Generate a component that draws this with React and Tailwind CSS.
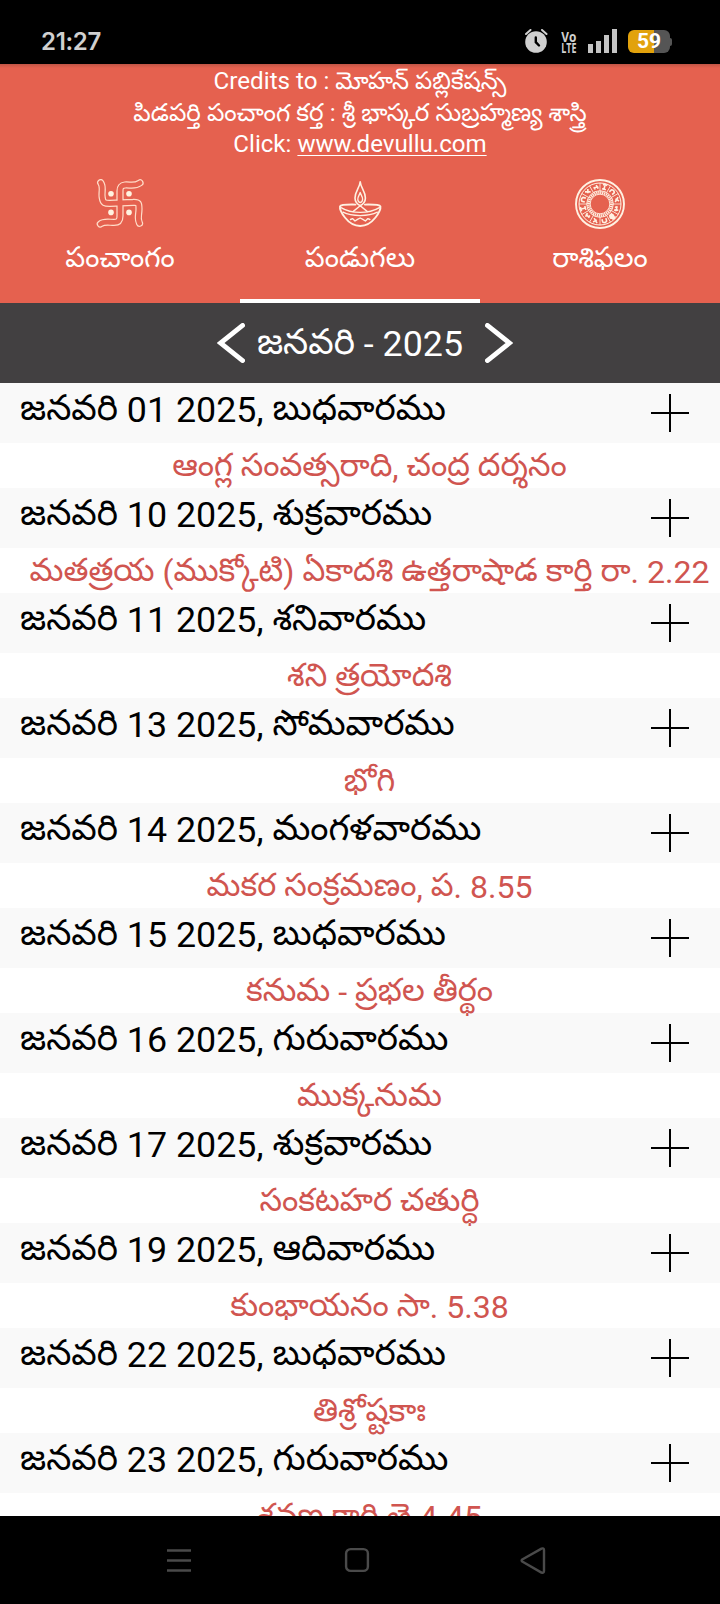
const days = [
  ['01', 'బుధవారము', 'ఆంగ్ల సంవత్సరాది, చంద్ర దర్శనం'],
  ['10', 'శుక్రవారము', 'మతత్రయ (ముక్కోటి) ఏకాదశి ఉత్తరాషాడ కార్తి రా. 2.22'],
  ['11', 'శనివారము', 'శని త్రయోదశి'],
  ['13', 'సోమవారము', 'భోగి'],
  ['14', 'మంగళవారము', 'మకర సంక్రమణం, ప. 8.55'],
  ['15', 'బుధవారము', 'కనుమ - ప్రభల తీర్థం'],
  ['16', 'గురువారము', 'ముక్కనుమ'],
  ['17', 'శుక్రవారము', 'సంకటహర చతుర్ధి'],
  ['19', 'ఆదివారము', 'కుంభాయనం సా. 5.38'],
  ['22', 'బుధవారము', 'తిశ్రోష్టకాః'],
  ['23', 'గురువారము', 'శ్రవణ కార్తి తె 4.45'],
];

// Lowers digits and Latin punctuation slightly against the Telugu letters.
function Mixed({ text }) {
  return text
    .split(/([0-9.,()-]+)/)
    .map((part, i) => (i % 2 ? <span key={i} className="align-[-0.05em]">{part}</span> : part));
}

function Swastika() {
  const arms =
    'M5.7 3.7 C9 8 6 14 7.3 19 C8 24 10 24.5 15 24.4 L38 23.4 C44 23 44 25 44 30 C44 36 42 39 44.5 44.3 M45 3.9 C39 8 35 5.5 30 6 C26 6.5 25 8 25 12 L25 37 C25 42 23 43.4 19 43.4 C14 43.4 9 42 5.3 45';
  return (
    <svg className="size-[50px]" viewBox="0 0 50 50" fill="none" strokeLinecap="round" strokeLinejoin="round">
      <path d={arms} stroke="#ffdcc8" strokeWidth="7.2" />
      <path d={arms} stroke="#e5614f" strokeWidth="4.8" />
      <g fill="#fff3e0">
        <circle cx="16" cy="14.7" r="2.8" />
        <circle cx="34" cy="14.7" r="2.8" />
        <circle cx="16" cy="33.4" r="2.8" />
        <circle cx="34" cy="33.4" r="2.8" />
      </g>
    </svg>
  );
}

function Lamp() {
  return (
    <svg className="size-[50px]" viewBox="0 0 50 50" fill="none" stroke="#fff1e2" strokeWidth="1.6" strokeLinejoin="round" strokeLinecap="round">
      <path d="M25.2 2.8 C24.7 9 20 12 20 19 C20 22.5 22 25 25.2 26.8 C28.4 25 30.4 22.5 30.4 19 C30.4 12 25.7 9 25.2 2.8Z" />
      <path strokeWidth="1.3" d="M25.2 13.5 C24.5 16 22.8 17.5 22.8 20.2 C22.8 22 23.9 23.2 25.2 23.6 C26.5 23.2 27.6 22 27.6 20.2 C27.6 17.5 25.9 16 25.2 13.5Z" />
      <path strokeWidth="1.9" d="M20.5 25.6 C12 25.4 5.6 26 5 27.4 C4.4 31 12 46.8 25.2 47 C38.4 46.8 46 31 45.4 27.4 C44.8 26 38.4 25.4 29.9 25.6" />
      <path strokeWidth="1.4" d="M6 28.6 C11 31.6 17 33.4 25.2 33.4 S39.4 31.6 44.4 28.6" />
      <path strokeWidth="1.3" d="M8 33.2 C13 35.8 19 36.6 25.2 36.6 S37.4 35.8 42.4 33.2" />
      <path strokeWidth="1.4" d="M25.2 26.8 L18 32.6 M25.2 26.8 L32.4 32.6" />
      <path strokeWidth="1.4" d="M15.5 40.5 L17.5 39.6 L20 42 L22.5 40.4 L25.2 39 L27.9 40.4 L30.4 42 L32.9 39.6 L34.9 40.5" />
    </svg>
  );
}

function Zodiac() {
  const sectors = Array.from({ length: 12 }, (_, i) => i * 30);
  const signs = [
    'M-2 -2 Q0 -4 2 -2 M-2 2 H2 M0 -2 V2',
    'M-2 2 V-1 Q0 -3 2 -1 V2',
    'M-2 -2 L2 2 M2 -2 L-1 1',
    'M-2.2 0 H2 L1 -2 M-1 0 V2 M2 0 V2',
  ];
  return (
    <svg className="size-[50px]" viewBox="0 0 50 50" fill="none" stroke="#fff1e2">
      <circle cx="25" cy="25" r="24" strokeWidth="1.9" />
      <circle cx="25" cy="25" r="21" strokeWidth="1" />
      <circle cx="25" cy="25" r="13.3" strokeWidth="0.9" />
      <circle cx="25" cy="25" r="11.5" strokeWidth="2.8" strokeDasharray="1.3 0.7" />
      <circle cx="25" cy="25" r="9.8" strokeWidth="0.9" />
      {sectors.map((a, i) => (
        <g key={a} transform={`rotate(${a} 25 25)`}>
          <path d="M25 4 V12" strokeWidth="0.8" />
          <g transform="rotate(15 25 25) translate(25 7.8)">
            <path d={signs[i % 4]} strokeWidth="1.6" />
          </g>
        </g>
      ))}
      <circle cx="36.8" cy="37.4" r="2.6" fill="#fff1e2" stroke="none" />
    </svg>
  );
}

function StatusBar() {
  return (
    <div className="flex h-16 shrink-0 items-end justify-between bg-black pb-[11px] pl-[41px] pr-[48px] text-[#d0d0d0]">
      <div className="mb-[-1px] font-[Inter,sans-serif] text-[24px] font-semibold leading-[24px] tracking-[-0.3px]">21:27</div>
      <div className="flex items-end">
        <svg className="mr-[12px] h-6 w-6" viewBox="0 0 24 24">
          <circle cx="11" cy="13" r="10.8" fill="#d0d0d0" />
          <path d="M1 5 L5.5 1 M21.5 5 L17 1" stroke="#d0d0d0" strokeWidth="2" strokeLinecap="round" />
          <path d="M10.8 8.5 V13.2 L14 16.5" fill="none" stroke="#000" strokeWidth="2.4" strokeLinecap="round" />
        </svg>
        <div className="mr-[11px] flex w-4 flex-col items-center font-['Open_Sans',sans-serif] text-[14px] font-bold leading-[11px]">
          <div className="scale-x-[0.85]">Vo</div>
          <div className="scale-x-[0.64]">LTE</div>
        </div>
        <div className="mr-[11px] flex items-end gap-[3px]">
          <div className="h-[9px] w-[5px] bg-[#c4c4c4]" />
          <div className="h-[12px] w-[5px] bg-[#c4c4c4]" />
          <div className="h-[18px] w-[5px] bg-[#c4c4c4]" />
          <div className="h-[24px] w-[5px] bg-[#c4c4c4]" />
        </div>
        <div className="flex items-center">
          <div className="flex h-[23px] w-[42px] items-center justify-center rounded-[6px] bg-linear-to-r from-[#e2a20c] from-62% to-[#555555] to-62% font-[Roboto,sans-serif] text-[21px] font-bold leading-none text-white">
            59
          </div>
          <div className="h-2 w-[2px] rounded-r-sm bg-[#555555]" />
        </div>
      </div>
    </div>
  );
}

function Tab({ icon, label, active }) {
  return (
    <div className="flex flex-col items-center justify-between">
      <div className="flex flex-col items-center">
        {icon}
        <div className="mt-[7px] text-[28px] leading-[44px]">{label}</div>
      </div>
      <div className={active ? 'h-1 w-full bg-white' : 'h-1 w-full'} />
    </div>
  );
}

export default function App() {
  return (
    <div className="flex h-[1604px] w-[720px] flex-col overflow-hidden bg-white font-[Roboto,'Noto_Sans_Telugu','Noto_Sans',sans-serif]">
      <StatusBar />
      <div className="flex h-[239px] shrink-0 flex-col bg-[#e5614f] text-white">
        <div className="h-1 shrink-0 bg-linear-to-b from-[#c05546] to-[#e5614f]" />
        <div className="-mt-px h-[111px] shrink-0 whitespace-nowrap text-center leading-[31px]">
          <div className="-mt-px text-[24.2px]">Credits to : మోహన్ పబ్లికేషన్స్</div>
          <div className="text-[24.5px]">పిడపర్తి పంచాంగ కర్త : శ్రీ భాస్కర సుబ్రహ్మణ్య శాస్త్రి</div>
          <div className="mt-px text-[24.1px]">
            Click: <span className="underline decoration-1 underline-offset-[3px]">www.devullu.com</span>
          </div>
        </div>
        <div className="grid flex-1 grid-cols-3 pt-px">
          <Tab icon={<Swastika />} label="పంచాంగం" />
          <Tab icon={<Lamp />} label="పండుగలు" active />
          <Tab icon={<Zodiac />} label="రాశిఫలం" />
        </div>
      </div>
      <div className="flex h-20 shrink-0 items-center bg-[#424041] pl-[217px] text-[35.8px] text-white">
        <svg className="h-10 w-7 shrink-0" viewBox="0 0 28 40" fill="none" stroke="white" strokeWidth="4.8" strokeLinecap="round" strokeLinejoin="miter">
          <path d="M25.6 2.4 L3.5 20 L25.6 37.6" />
        </svg>
        <div className="w-[240px] whitespace-nowrap pr-[10px] text-center leading-[52px]">
          <Mixed text="జనవరి - 2025" />
        </div>
        <svg className="h-10 w-7 shrink-0" viewBox="0 0 28 40" fill="none" stroke="white" strokeWidth="4.8" strokeLinecap="round" strokeLinejoin="miter">
          <path d="M2.4 2.4 L24.5 20 L2.4 37.6" />
        </svg>
      </div>
      <div className="min-h-0 flex-1 overflow-hidden">
        {days.map(([date, weekday, festival]) => (
          <div key={date}>
            <div className="flex h-[59.5px] items-start justify-between bg-[#f9f9f9] pl-5 pr-[31px]">
              <div className="h-[52px] whitespace-nowrap text-[35.8px] leading-[51px] text-black">
                <Mixed text={`జనవరి ${date} 2025, ${weekday}`} />
              </div>
              <svg className="mt-[11px] size-[38px]" viewBox="0 0 38 38" stroke="black" strokeWidth="2">
                <path d="M19 0 V38 M0 19 H38" />
              </svg>
            </div>
            <div className="h-[45.5px] whitespace-nowrap pl-[19px] text-center text-[32.1px] leading-[45px] text-[#d05550]">
              <Mixed text={festival} />
            </div>
          </div>
        ))}
      </div>
      <div className="flex h-[88px] shrink-0 items-center bg-black pl-[166px] pt-[2px]">
        <svg className="h-7 w-[26px]" viewBox="0 0 26 28" stroke="#4a4a4a" strokeWidth="2.6">
          <path d="M1 3.5 H25 M1 13.5 H25 M1 23.5 H25" />
        </svg>
        <svg className="ml-[152px] h-7 w-[26px]" viewBox="0 0 26 28" fill="none" stroke="#4a4a4a" strokeWidth="2.4">
          <rect x="2.1" y="2.1" width="21.8" height="21.8" rx="4.5" />
        </svg>
        <svg className="ml-[150px] h-7 w-[26px]" viewBox="0 0 26 28" fill="none" stroke="#4a4a4a" strokeWidth="2.4" strokeLinejoin="round">
          <path d="M2.2 12.5 Q1 13.5 2.2 14.5 L21.5 25.6 Q24 26.3 24 24 V3 Q24 0.7 21.5 1.6Z" />
        </svg>
      </div>
    </div>
  );
}
